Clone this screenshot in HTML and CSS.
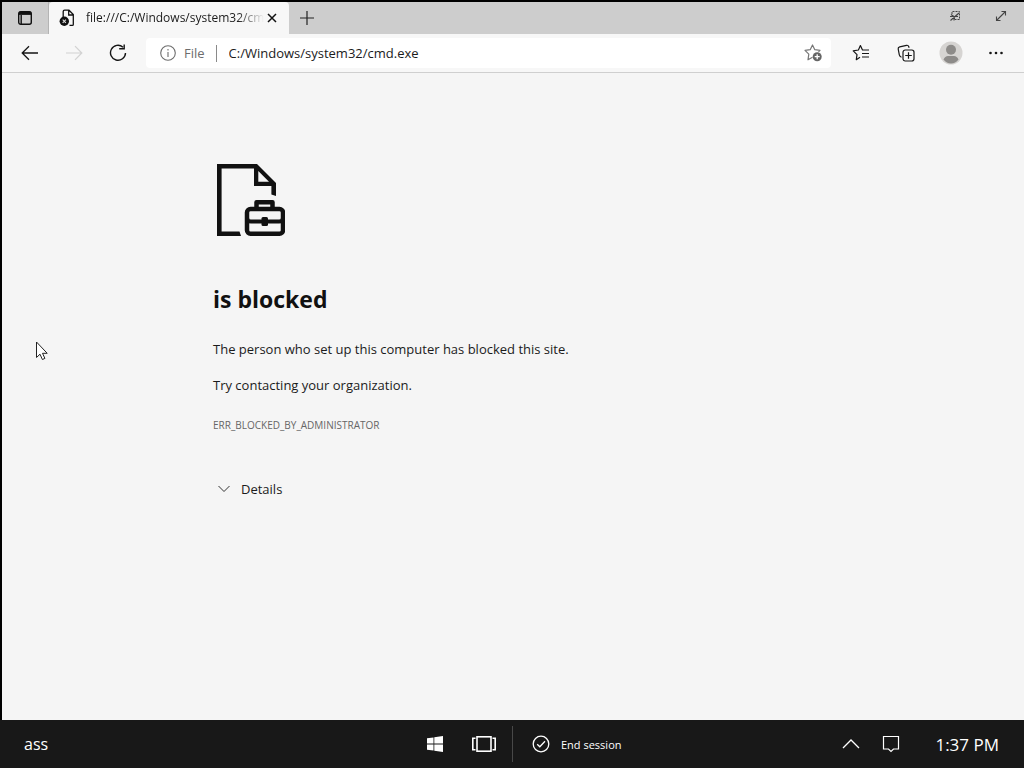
FILE: index.html
```html
<!DOCTYPE html>
<html lang="en">
<head>
<meta charset="utf-8">
<meta name="viewport" content="width=device-width, initial-scale=1">
<title>file:///C:/Windows/system32/cmd.exe</title>
<link rel="stylesheet" href="styles.css">
</head>
<body>
<div class="browser">
  <header class="tabstrip">
    <button class="tab-actions" aria-label="Tab actions">
      <svg width="16" height="16" viewBox="0 0 16 16" fill="none" stroke="#111" stroke-width="1.4"><rect x="1.7" y="1.7" width="12.6" height="12.6" rx="2"/><path d="M2 3.3h12" stroke-width="3.2"/><path d="M4.2 5v9"/></svg>
    </button>
    <div class="tab">
      <svg class="tab-icon" width="16" height="18" viewBox="0 0 16 18" fill="none" stroke="#111" stroke-width="1.3"><path d="M4.2 8V2.6Q4.2 1.2 5.6 1.2H10L14.3 5.5V15.4Q14.3 16.4 13.3 16.4H10.5M9.7 1.4V6H14.2"/><circle cx="5.3" cy="12.3" r="4.7" fill="#111" stroke="none"/><path d="M3.7 10.7l3.2 3.2m0-3.2l-3.2 3.2" stroke="#ddd" stroke-width="1.1"/></svg>
      <span class="tab-title">file:///C:/Windows/system32/cm</span>
      <button class="tab-close" aria-label="Close tab">
        <svg width="10" height="10" viewBox="0 0 10 10" stroke="#111" stroke-width="1.5"><path d="M1 1l8 8M9 1L1 9"/></svg>
      </button>
    </div>
    <button class="new-tab" aria-label="New tab">
      <svg width="16" height="16" viewBox="0 0 16 16" stroke="#222" stroke-width="1.2"><path d="M8 1v14M1 8h14"/></svg>
    </button>
    <div class="window-controls">
      <button aria-label="Unpin window">
        <svg width="12" height="12" viewBox="0 0 12 12" fill="none" stroke="#444"><path d="M3 4V1.500H10.500V9.500H5" stroke-dasharray="2 1"/><path d="M1 6.500h8M3 8.500h3M1.500 10.500L10 3M2 4.500l3 2v4" stroke-width="1.100"/></svg>
      </button>
      <button aria-label="Full screen">
        <svg width="12" height="12" viewBox="0 0 12 12" fill="none" stroke="#444" stroke-width="1.100"><path d="M1.500 10.500l9-9M6.500 1.500h4v4M1.500 6.500v4h4"/></svg>
      </button>
    </div>
  </header>
  <nav class="toolbar" aria-label="Navigation">
    <button class="nav-button" aria-label="Back">
      <svg width="18" height="16" viewBox="0 0 18 16" fill="none" stroke="#161616" stroke-width="1.300"><path d="M17 8H1.500M8 1.200L1.200 8 8 14.800"/></svg>
    </button>
    <button class="nav-button" aria-label="Forward" disabled>
      <svg width="18" height="16" viewBox="0 0 18 16" fill="none" stroke="#d2d2d2" stroke-width="1.200"><path d="M1 8h15.500M10 1.200L16.800 8 10 14.800"/></svg>
    </button>
    <button class="nav-button" aria-label="Refresh">
      <svg width="18" height="18" viewBox="0 0 18 18" fill="none" stroke="#161616" stroke-width="1.400"><path d="M14 3.200A7.500 7.500 0 1 0 16.500 9M10.200 4.700h5V.5"/></svg>
    </button>
    <div class="address">
      <svg width="16" height="16" viewBox="0 0 16 16" fill="none" stroke="#6d6d6d" stroke-width="1.100"><circle cx="8" cy="8" r="7.300"/><path d="M8 7v5M8 4v1.400"/></svg>
      <label class="scheme" for="url">File</label>
      <input class="url" id="url" type="text" value="C:/Windows/system32/cmd.exe" spellcheck="false">
      <button class="favorite" aria-label="Add this page to favorites">
        <svg width="18" height="18" viewBox="0 0 18 18" fill="none" stroke="#777" stroke-width="1.200" stroke-linejoin="round"><path d="M8.500 13.200L4 15.800l.8-5.600L1 6.400l5.200-.7L8.500 1l2.300 4.700 5.200.7-1.500 1.500"/><circle cx="13.200" cy="12.700" r="4.500" fill="#656565" stroke="none"/><path d="M13.200 10.200v5M10.700 12.700h5" stroke="#fff" stroke-width="1.300"/></svg>
      </button>
    </div>
    <div class="tools">
      <button aria-label="Favorites">
        <svg width="18" height="18" viewBox="0 0 18 18" fill="none" stroke="#161616" stroke-width="1.200" stroke-linejoin="round"><path d="M8 13.200L4.300 15.700 5 10.600 1.200 6.800l5.200-.8L8.400 1.500 10.500 6H17M10 9.500h7M10 13h7"/></svg>
      </button>
      <button aria-label="Collections">
        <svg width="18" height="18" viewBox="0 0 18 18" fill="none" stroke="#161616" stroke-width="1.200"><path d="M4.500 13.200Q2.800 12.500 2.300 10.800L1.200 5Q.9 3.200 2.700 2.800L9.500 1.300Q11.300 1 11.800 2.800l.3.900"/><rect x="6" y="6" width="11" height="11" rx="2.200"/><path d="M11.500 8.200v6.600M8.200 11.500h6.600"/></svg>
      </button>
      <button aria-label="Profile">
        <svg width="24" height="24" viewBox="0 0 24 24"><circle cx="12" cy="12" r="11.500" fill="#d6d4d2"/><circle cx="12" cy="8.800" r="5" fill="#8d8b89"/><path d="M4.500 18.500Q6 15 9 15h6q3 0 4.500 3.500Q16.500 22.500 12 22.500T4.500 18.500z" fill="#8d8b89"/></svg>
      </button>
      <button aria-label="Settings and more">
        <svg width="16" height="4" viewBox="0 0 16 4" fill="#161616"><circle cx="2.500" cy="2" r="1.300"/><circle cx="8" cy="2" r="1.300"/><circle cx="13.500" cy="2" r="1.300"/></svg>
      </button>
    </div>
  </nav>
  <main class="page">
    <div class="error">
      <svg class="error-icon" width="72" height="72" viewBox="0 0 72 72" fill="#111"><path d="M4 0H44L63 19V32L58.400 30.500V22H41V4.500H8.600V67.500H26.500L28 72H4zM45.300 7V17.700H56z"/><g fill="none" stroke="#111" stroke-width="4.500"><rect x="34" y="45" width="36" height="24.700" rx="3.500"/><path d="M43.500 44v-5.700h16V44" stroke-linejoin="round"/><path d="M34 54q0 3.500 4 3.500h28q4 0 4-3.500" stroke-width="4"/></g><rect x="48.500" y="53" width="6.500" height="9" rx="1.500"/></svg>
      <h1>is blocked</h1>
      <p>The person who set up this computer has blocked this site.</p>
      <p>Try contacting your organization.</p>
      <p class="code">ERR_BLOCKED_BY_ADMINISTRATOR</p>
      <button class="details">
        <svg width="12" height="8" viewBox="0 0 12 8" fill="none" stroke="#333" stroke-width="1"><path d="M.5 1L6 6.500 11.500 1"/></svg>
        Details
      </button>
    </div>
  </main>
</div>
<footer class="taskbar">
  <span class="user">ass</span>
  <div class="task-center">
    <button aria-label="Start">
      <svg width="16" height="16" viewBox="0 0 16 16" fill="#fff"><path d="M0 2.300L6.500 1.400V7.500H0zM7.300 1.300L16 0v7.500H7.300zM0 8.400h6.500v6.200L0 13.700zM7.300 8.400H16V16l-8.700-1.200z"/></svg>
    </button>
    <button aria-label="Task view">
      <svg width="24" height="16" viewBox="0 0 24 16" fill="none" stroke="#fff" stroke-width="1.600"><rect x="5" y=".8" width="14" height="14.400"/><path d="M3.500 2.200H.8v11.600h2.700M20.500 2.200h2.700v11.600h-2.700"/></svg>
    </button>
  </div>
  <button class="end-session">
    <svg width="18" height="18" viewBox="0 0 18 18" fill="none" stroke="#fff" stroke-width="1.300"><circle cx="9" cy="9" r="7.800"/><path d="M5.200 9.200l2.600 2.600 5.200-5.600"/></svg>
    End session
  </button>
  <div class="tray">
    <button aria-label="Show hidden icons">
      <svg width="18" height="12" viewBox="0 0 18 12" fill="none" stroke="#fff" stroke-width="1.300"><path d="M1 10l8-8 8 8"/></svg>
    </button>
    <button aria-label="Notifications">
      <svg width="18" height="18" viewBox="0 0 18 18" fill="none" stroke="#fff" stroke-width="1.200"><path d="M1.500 1.500h15v12.500h-5L9 16.500 6.500 14h-5z"/></svg>
    </button>
    <time datetime="13:37">1:37 PM</time>
  </div>
</footer>
<svg class="cursor" width="14" height="20" viewBox="0 0 14 20" fill="#fff" stroke="#222" stroke-width="1" aria-hidden="true"><path d="M1.500 1v15.500l3.500-3.300 2.400 5.300 2.500-1.100L7.500 12.300h4.700z"/></svg>
</body>
</html>
```
FILE: styles.css
```css
* {
  box-sizing: border-box;
}

body {
  margin: 0;
  min-height: 100vh;
  display: flex;
  flex-direction: column;
  font-family: "Open Sans", "Noto Sans", sans-serif;
  font-size: 13px;
  color: #1b1b1b;
  background: #181818;
}

button {
  display: flex;
  align-items: center;
  justify-content: center;
  padding: 0;
  border: 0;
  background: none;
  font: inherit;
  color: inherit;
}

svg {
  flex: none;
}

.browser {
  flex: 1;
  display: flex;
  flex-direction: column;
  border: solid #000;
  border-width: 2px 0 0 2px;
  background: #f5f5f5;
}

.tabstrip {
  display: flex;
  height: 32px;
  background: #cdcdcd;
}

.tab-actions {
  width: 47px;
  border-right: 1px solid #b4b4b4;
}

.tab {
  display: flex;
  align-items: center;
  width: 240px;
  padding: 0 12px 0 10px;
  border-radius: 4px 4px 0 0;
  background: #f7f7f7;
}

.tab-title {
  margin-left: 11px;
  white-space: nowrap;
  font-size: 12px;
  line-height: 16px;
  mask-image: linear-gradient(to right, #000 85%, transparent);
}

.tab-close {
  margin-left: auto;
}

.new-tab {
  width: 36px;
}

.window-controls {
  display: flex;
  align-items: center;
  gap: 34px;
  margin-left: auto;
  padding: 0 17px 4px 0;
}

.toolbar {
  display: flex;
  align-items: center;
  height: 39px;
  padding-left: 6px;
  background: #f7f7f7;
  border-bottom: 1px solid #cfcfcf;
}

.nav-button {
  width: 44px;
  height: 32px;
}

.address {
  flex: 1;
  display: flex;
  align-items: center;
  height: 30px;
  margin-left: 6px;
  padding: 0 9px 0 14px;
  border-radius: 4px;
  background: #fff;
}

.scheme {
  margin-left: 8px;
  padding-right: 11px;
  border-right: 1px solid #8a8a8a;
  line-height: 17px;
  color: #6d6d6d;
}

.url {
  flex: 1;
  min-width: 0;
  padding: 0 12px;
  border: 0;
  outline: 0;
  background: none;
  font: inherit;
  color: #1b1b1b;
}

.tools {
  display: flex;
  align-items: center;
  margin-left: 7px;
  padding-right: 6px;
}

.tools button {
  width: 45px;
  height: 32px;
}

.page {
  flex: 1;
  padding: 91px 24px 24px;
}

.error {
  max-width: 600px;
  margin: 0 auto;
}

.error-icon {
  display: block;
}

.error h1 {
  margin: 47px 0 24px;
  font-size: 23px;
  line-height: 32px;
  font-weight: 700;
  color: #111;
}

.error p {
  margin: 0 0 16px;
  line-height: 20px;
}

.error .code {
  margin: 0;
  padding-top: 4px;
  font-size: 10px;
  color: #666;
}

.details {
  gap: 11px;
  margin-top: 44px;
  padding-left: 5px;
  line-height: 20px;
}

.taskbar {
  display: flex;
  align-items: center;
  height: 48px;
  background: #181818;
  color: #fff;
}

.user {
  width: calc(50% - 85px);
  padding-left: 24px;
  font-size: 16px;
}

.task-center {
  display: flex;
  align-items: center;
  gap: 29px;
  height: 36px;
  padding-right: 16px;
  border-right: 1px solid #484848;
}

.end-session {
  gap: 11px;
  padding-left: 19px;
  font-size: 11px;
}

.tray {
  display: flex;
  align-items: center;
  gap: 22px;
  margin-left: auto;
  padding-right: 25px;
}

.tray time {
  margin-left: 13px;
  font-size: 17px;
}

.cursor {
  position: absolute;
  left: 35px;
  top: 341px;
}
```
